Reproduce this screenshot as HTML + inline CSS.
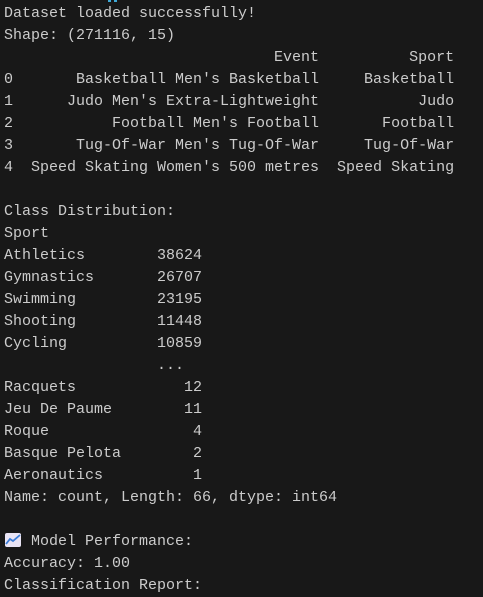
<!DOCTYPE html>
<html><head><meta charset="utf-8"><style>
html,body{margin:0;padding:0;background:#181818;width:483px;height:579px;overflow:hidden}
pre{margin:0;position:absolute;left:4px;top:3px;font-family:"Liberation Mono","DejaVu Sans Mono",monospace;font-size:15px;line-height:22px;color:#cccccc;white-space:pre}
.cy{position:absolute;top:0;height:2px;background:#3fa9d6}
.em{display:inline-block;width:18px;height:16px;vertical-align:-3px;margin-right:0}
</style></head><body>
<div class="cy" style="left:108px;width:3px"></div><div class="cy" style="left:114px;width:3px"></div>
<pre>Dataset loaded successfully!
Shape: (271116, 15)
                              Event          Sport
0       Basketball Men's Basketball     Basketball
1      Judo Men's Extra-Lightweight           Judo
2           Football Men's Football       Football
3       Tug-Of-War Men's Tug-Of-War     Tug-Of-War
4  Speed Skating Women's 500 metres  Speed Skating

Class Distribution:
Sport
Athletics        38624
Gymnastics       26707
Swimming         23195
Shooting         11448
Cycling          10859
                 ...  
Racquets            12
Jeu De Paume        11
Roque                4
Basque Pelota        2
Aeronautics          1
Name: count, Length: 66, dtype: int64

<svg class="em" viewBox="0 0 18 16"><rect x="1" y="1" width="16" height="14" rx="2" fill="#e9e4f5"/><path d="M2 12 L6 7 L9 9 L16 3" stroke="#3b7dd8" stroke-width="1.8" fill="none"/></svg> Model Performance:
Accuracy: 1.00
Classification Report:</pre>
</body></html>
